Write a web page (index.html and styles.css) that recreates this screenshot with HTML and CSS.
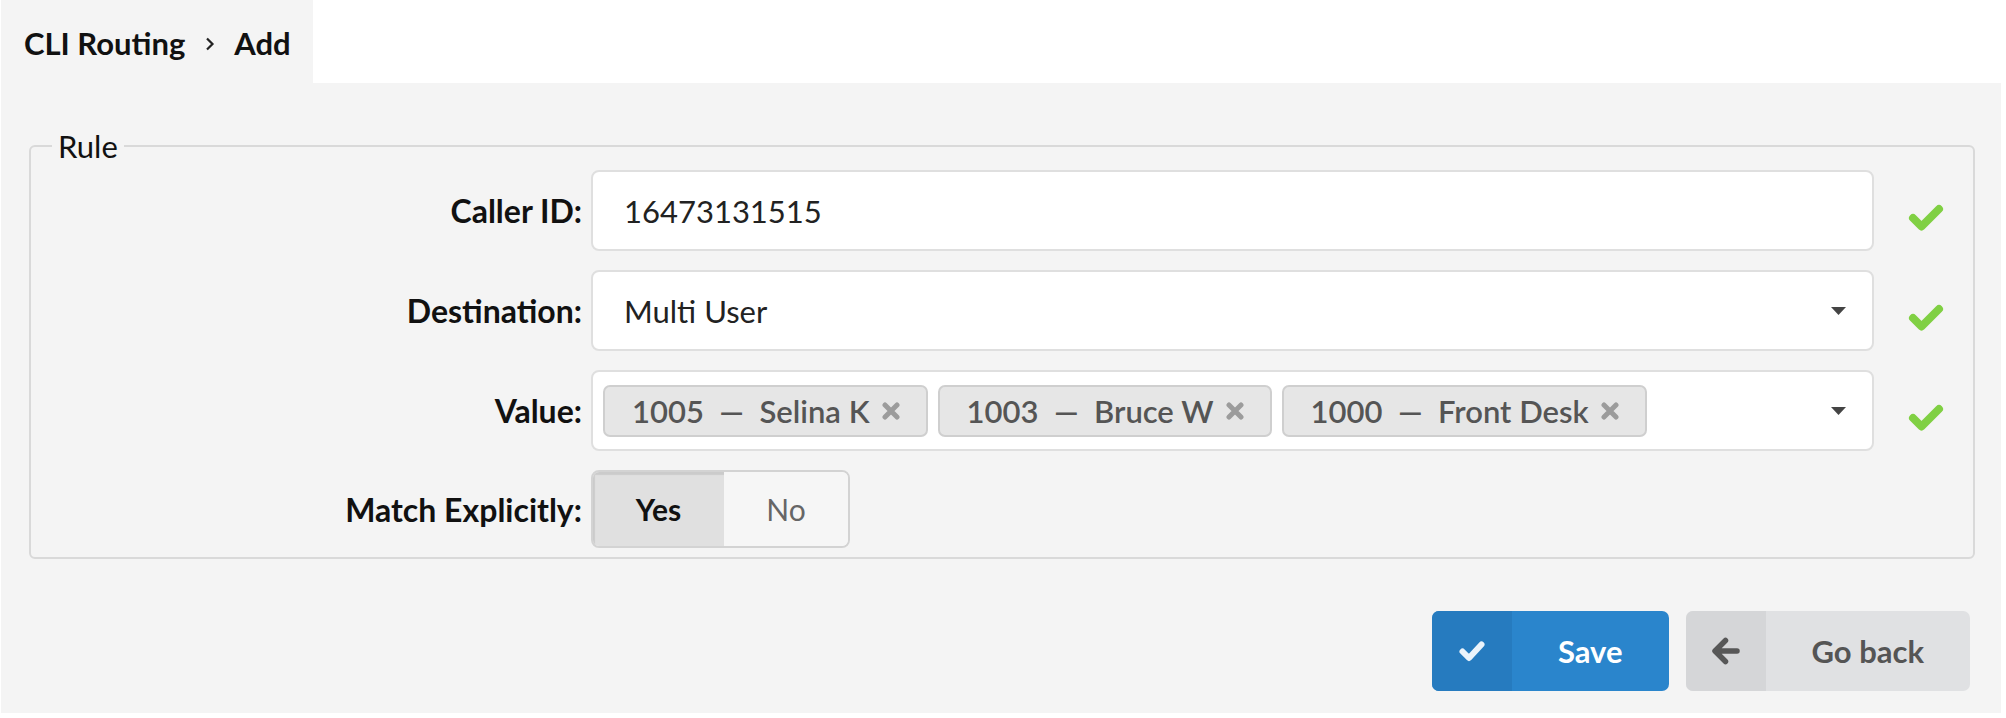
FILE: index.html
```html
<!DOCTYPE html>
<html>
<head>
<meta charset="utf-8">
<link rel="stylesheet" href="styles.css">
</head>
<body>
<div class="page">
  <div class="tabs">
    <div class="tab">
      <span class="crumb">CLI Routing</span>
      <svg class="chev" width="10" height="14" viewBox="0 0 10 14"><polyline points="2,1.5 7.5,7 2,12.5" fill="none" stroke="#222" stroke-width="2.2"/></svg>
      <span class="crumb">Add</span>
    </div>
  </div>
  <div class="panel">
    <fieldset class="rule">
      <legend class="legend">Rule</legend>
      <div class="form">
        <div class="row">
          <div class="lbl">Caller ID:</div>
          <div class="field"><span class="val">16473131515</span></div>
          <div class="ok"><svg width="36" height="28" viewBox="0 0 36 28"><polyline points="5,14 13.5,22.5 31,5" fill="none" stroke="#80d043" stroke-width="8" stroke-linecap="round" stroke-linejoin="round"/></svg></div>
        </div>
        <div class="row">
          <div class="lbl">Destination:</div>
          <div class="field select"><span class="val">Multi User</span><svg class="caret" width="15" height="8" viewBox="0 0 15 8"><polygon points="0,0 15,0 7.5,8" fill="#444"/></svg></div>
          <div class="ok"><svg width="36" height="28" viewBox="0 0 36 28"><polyline points="5,14 13.5,22.5 31,5" fill="none" stroke="#80d043" stroke-width="8" stroke-linecap="round" stroke-linejoin="round"/></svg></div>
        </div>
        <div class="row">
          <div class="lbl">Value:</div>
          <div class="field select multi">
            <div class="tags">
              <span class="tag">1005 &nbsp;—&nbsp; Selina K<svg class="x" width="18" height="18" viewBox="0 0 18 18"><path d="M3 3L15 15M15 3L3 15" stroke="#9c9c9c" stroke-width="5" stroke-linecap="round"/></svg></span>
              <span class="tag">1003 &nbsp;—&nbsp; Bruce W<svg class="x" width="18" height="18" viewBox="0 0 18 18"><path d="M3 3L15 15M15 3L3 15" stroke="#9c9c9c" stroke-width="5" stroke-linecap="round"/></svg></span>
              <span class="tag">1000 &nbsp;—&nbsp; Front Desk<svg class="x" width="18" height="18" viewBox="0 0 18 18"><path d="M3 3L15 15M15 3L3 15" stroke="#9c9c9c" stroke-width="5" stroke-linecap="round"/></svg></span>
            </div>
            <svg class="caret" width="15" height="8" viewBox="0 0 15 8"><polygon points="0,0 15,0 7.5,8" fill="#444"/></svg>
          </div>
          <div class="ok"><svg width="36" height="28" viewBox="0 0 36 28"><polyline points="5,14 13.5,22.5 31,5" fill="none" stroke="#80d043" stroke-width="8" stroke-linecap="round" stroke-linejoin="round"/></svg></div>
        </div>
        <div class="row">
          <div class="lbl">Match Explicitly:</div>
          <div class="toggle">
            <span class="seg seg-on">Yes</span>
            <span class="seg seg-off">No</span>
          </div>
        </div>
      </div>
    </fieldset>
    <div class="actions">
      <div class="btn btn-save">
        <span class="btn-icon"><svg width="28" height="24" viewBox="0 0 28 24"><polyline points="4.5,12.5 11,19 23.5,5.5" fill="none" stroke="#eaf3fb" stroke-width="6" stroke-linecap="round" stroke-linejoin="round"/></svg></span>
        <span class="btn-text">Save</span>
      </div>
      <div class="btn btn-back">
        <span class="btn-icon"><svg width="30" height="30" viewBox="0 0 30 30"><path d="M26 15H6M14.5 4.5L4 15L14.5 25.5" fill="none" stroke="#575757" stroke-width="5.5" stroke-linecap="round" stroke-linejoin="round"/></svg></span>
        <span class="btn-text">Go back</span>
      </div>
    </div>
  </div>
</div>
</body>
</html>
```
FILE: styles.css
```css
* { box-sizing: border-box; }
html, body { margin: 0; padding: 0; background: #fff; }
body { font-family: Lato, "Open Sans", "Liberation Sans", sans-serif; color: #111; }

.page { width: 2001px; padding-left: 1px; }

.tabs { display: flex; height: 83px; }
.tab {
  width: 312px;
  background: #f4f4f4;
  display: flex;
  align-items: center;
  padding: 3px 0 0 23px;
}
.crumb { font-size: 31px; font-weight: 700; color: #111; line-height: 1; }
.chev { margin: 2px 19px 0 20px; }

.panel {
  background: #f4f4f4;
  padding: 45px 26px 21px 28px;
  height: 630px;
}

.rule {
  margin: 0;
  border: 2px solid #d9d9d9;
  border-radius: 6px;
  padding: 6px 0 9px 0;
  min-width: 0;
}
.legend {
  margin-left: 21px;
  padding: 0 6px;
  font-size: 31px;
  line-height: 36px;
  color: #111;
}

.form { display: flex; flex-direction: column; gap: 19px; }
.row {
  display: grid;
  grid-template-columns: 560px 1283px 98px;
  align-items: center;
}
.lbl {
  text-align: right;
  padding-right: 9px;
  font-size: 32px;
  font-weight: 700;
  color: #111;
}
.field {
  height: 81px;
  background: #fff;
  border: 2px solid #dfdfdf;
  border-radius: 8px;
  display: flex;
  align-items: center;
  padding: 0 26px 0 31px;
}
.val { font-size: 31px; color: #222; }
.select { justify-content: space-between; }
.multi { padding-left: 10px; }
.tags { display: flex; gap: 10px; }
.tag {
  display: flex;
  align-items: center;
  height: 52px;
  padding: 0 26px 0 27px;
  background: #e6e6e6;
  border: 2px solid #cfcfcf;
  border-radius: 7px;
  font-size: 31px;
  font-weight: 600;
  color: #555;
  white-space: pre;
}
.x { margin-left: 12px; }
.ok { padding-left: 34px; margin-top: 14px; display: flex; }

.toggle {
  display: flex;
  width: 259px;
  height: 78px;
  border: 2px solid #d3d3d3;
  border-radius: 8px;
  overflow: hidden;
}
.seg {
  display: flex;
  align-items: center;
  justify-content: center;
  font-size: 30px;
}
.seg-on {
  width: 131px;
  background: #e0e0e0;
  font-weight: 700;
  color: #111;
  box-shadow: inset 2px 3px 1px rgba(0,0,0,0.09);
}
.seg-off {
  flex: 1;
  background: #f6f6f6;
  color: #666;
}

.actions {
  display: flex;
  justify-content: flex-end;
  gap: 17px;
  margin-top: 52px;
  padding-right: 5px;
}
.btn {
  display: flex;
  height: 80px;
  border-radius: 7px;
  overflow: hidden;
  font-size: 31px;
  font-weight: 700;
}
.btn-icon {
  width: 80px;
  display: flex;
  align-items: center;
  justify-content: center;
}
.btn-text {
  display: flex;
  align-items: center;
  padding: 0 46px;
}
.btn-save { background: #2a85cc; color: #fff; }
.btn-save .btn-icon { background: #267bbf; }
.btn-back { background: #e0e1e3; color: #555; }
.btn-back .btn-icon { background: #d5d6d8; }
```
